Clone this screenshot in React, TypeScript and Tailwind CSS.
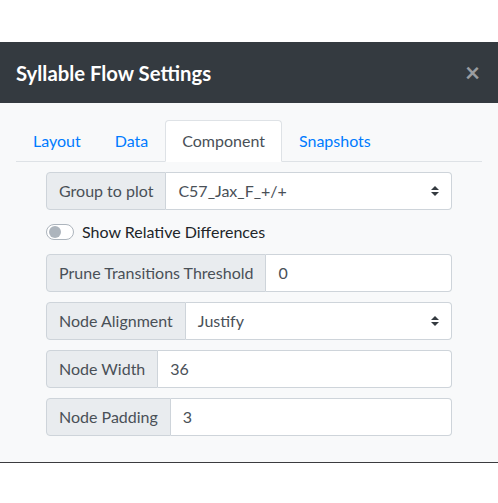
import React from "react";

function SelectArrows() {
  return (
    <svg width="8" height="10" viewBox="0 0 4 5" className="shrink-0">
      <path d="M2 0L0 2h4zm0 5L0 3h4z" fill="#343a40" />
    </svg>
  );
}

function Addon({ children }: { children: React.ReactNode }) {
  return (
    <div className="flex items-center px-3 bg-[#e9ecef] border border-[#ced4da] rounded-l-[4px] text-[#495057] whitespace-nowrap">
      {children}
    </div>
  );
}

function InputRow({ label, value, select }: { label: string; value: string; select?: boolean }) {
  return (
    <div className="flex h-[38px] text-[16px] leading-6">
      <Addon>{label}</Addon>
      <div className="flex-1 flex items-center justify-between pl-3 pr-[12px] bg-white border border-l-0 border-[#ced4da] rounded-r-[4px] text-[#495057]">
        <span>{value}</span>
        {select && <SelectArrows />}
      </div>
    </div>
  );
}

export default function App() {
  const tabs = ["Layout", "Data", "Component", "Snapshots"];
  return (
    <div className="w-[498px] h-[503px] bg-white font-['Lato',sans-serif] overflow-hidden">
      <div className="h-[42px]" />
      <div className="h-[61px] bg-[#343a40] flex items-center justify-between pl-4 pr-[18px]">
        <h5 className="text-white text-[20.3px] font-bold leading-[30px]">Syllable Flow Settings</h5>
        <span className="text-[#9a9da1] text-[26px] font-bold leading-none -mt-[2px]">×</span>
      </div>
      <div className="h-[359px] bg-[#f8f9fa] pt-[17px] px-4">
        <ul className="flex border-b border-[#dee2e6] text-[16px] leading-6">
          {tabs.map((t) => (
            <li key={t} className="-mb-px">
              <span
                className={
                  t === "Component"
                    ? "block px-4 py-2 border border-[#dee2e6] border-b-white bg-white rounded-t-[4px] text-[#495057]"
                    : "block px-4 py-2 border border-transparent text-[#007bff]"
                }
              >
                {t}
              </span>
            </li>
          ))}
        </ul>
        <div className="mt-[10px] px-[30px] flex flex-col gap-[10px]">
          <InputRow label="Group to plot" value="C57_Jax_F_+/+" select />
          <div className="flex items-center h-6 gap-2 text-[16px] leading-6 text-[#212529]">
            <div className="w-[28px] h-[16px] rounded-full border border-[#adb5bd] bg-white flex items-center pl-[2px]">
              <div className="w-[12px] h-[12px] rounded-full bg-[#adb5bd]" />
            </div>
            <span>Show Relative Differences</span>
          </div>
          <InputRow label="Prune Transitions Threshold" value="0" />
          <InputRow label="Node Alignment" value="Justify" select />
          <InputRow label="Node Width" value="36" />
          <InputRow label="Node Padding" value="3" />
        </div>
      </div>
      <div className="h-px bg-[#3b3b3f]" />
    </div>
  );
}
